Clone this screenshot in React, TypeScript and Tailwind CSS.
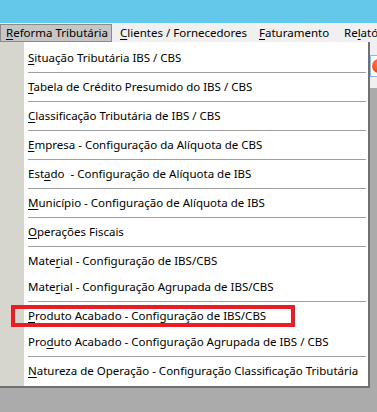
import React from "react";

type Item = { pre: string; key: string; post: string; sep?: boolean; mark?: boolean };

const items: Item[] = [
  { pre: "", key: "S", post: "ituação Tributária IBS / CBS", sep: true },
  { pre: "", key: "T", post: "abela de Crédito Presumido do IBS / CBS", sep: true },
  { pre: "", key: "C", post: "lassificação Tributária de IBS / CBS", sep: true },
  { pre: "", key: "E", post: "mpresa - Configuração da Alíquota de CBS", sep: true },
  { pre: "Est", key: "a", post: "do  - Configuração de Alíquota de IBS", sep: true },
  { pre: "", key: "M", post: "unicípio - Configuração de Alíquota de IBS", sep: true },
  { pre: "", key: "O", post: "perações Fiscais", sep: true },
  { pre: "Mate", key: "r", post: "ial - Configuração de IBS/CBS" },
  { pre: "Mate", key: "r", post: "ial - Configuração Agrupada de IBS/CBS", sep: true },
  { pre: "", key: "P", post: "roduto Acabado - Configuração de IBS/CBS", mark: true },
  { pre: "Pro", key: "d", post: "uto Acabado - Configuração Agrupada de IBS / CBS", sep: true },
  { pre: "", key: "N", post: "atureza de Operação - Configuração Classificação Tributária" },
];

const font = { fontFamily: "'Noto Sans', 'Open Sans', sans-serif" };

export default function App() {
  return (
    <div className="relative w-[377px] h-[412px] overflow-hidden bg-[#ababab] text-[11.5px] text-black" style={font}>
      {/* title strip */}
      <div className="h-[23px] bg-[#63c8e9]" />

      {/* menu bar */}
      <div className="h-[19px] bg-[#f0f0f0] flex items-center whitespace-nowrap overflow-hidden">
        <div className="h-[18px] w-[112px] shrink-0 flex items-center pl-[5px] bg-[#c6c6c6] border border-[#8a8a8a]">
          <span className="underline underline-offset-2">R</span>eforma Tributária
        </div>
        <div className="ml-[8px] w-[139px] shrink-0">
          <span className="underline underline-offset-2">C</span>lientes / Fornecedores
        </div>
        <div className="w-[85px] shrink-0">
          <span className="underline underline-offset-2">F</span>aturamento
        </div>
        <div className="shrink-0">
          Re<span className="underline underline-offset-2">l</span>ató
        </div>
      </div>

      {/* toolbar behind the menu */}
      <div className="h-[46px] bg-[#f0f0f0] flex justify-end pt-[13px]">
        <div className="w-[7px] h-[22px] bg-white border border-r-0 border-[#8cb8e6] pl-[1px] pt-[3px] overflow-hidden">
          <div className="w-[14px] h-[14px] rounded-full bg-[radial-gradient(circle_at_40%_35%,#ff7a40,#e02a10)]" />
        </div>
      </div>

      {/* dropdown */}
      <div className="absolute left-0 top-[42px] w-[370px] h-[346px] bg-white border-r-2 border-b-2 border-[#707070] flex">
        <div className="w-[24px] shrink-0 bg-[#d6d6ce]" />
        <div className="flex-1 pt-[3px] pr-[2px]">
          {items.map((it, i) => (
            <div key={i}>
              <div className="relative h-[26px] flex items-center pl-[4px] whitespace-pre">
                {it.mark && (
                  <div className="absolute left-[-13px] top-[2px] w-[284px] h-[22px] border-4 border-[#ec1c24]" />
                )}
                <span className="relative">
                  {it.pre}
                  <span className="underline underline-offset-2">{it.key}</span>
                  {it.post}
                </span>
              </div>
              {it.sep && <div className="h-[3px] flex items-center pl-[4px]"><div className="h-px w-full bg-[#a0a0a0]" /></div>}
            </div>
          ))}
        </div>
      </div>
    </div>
  );
}
